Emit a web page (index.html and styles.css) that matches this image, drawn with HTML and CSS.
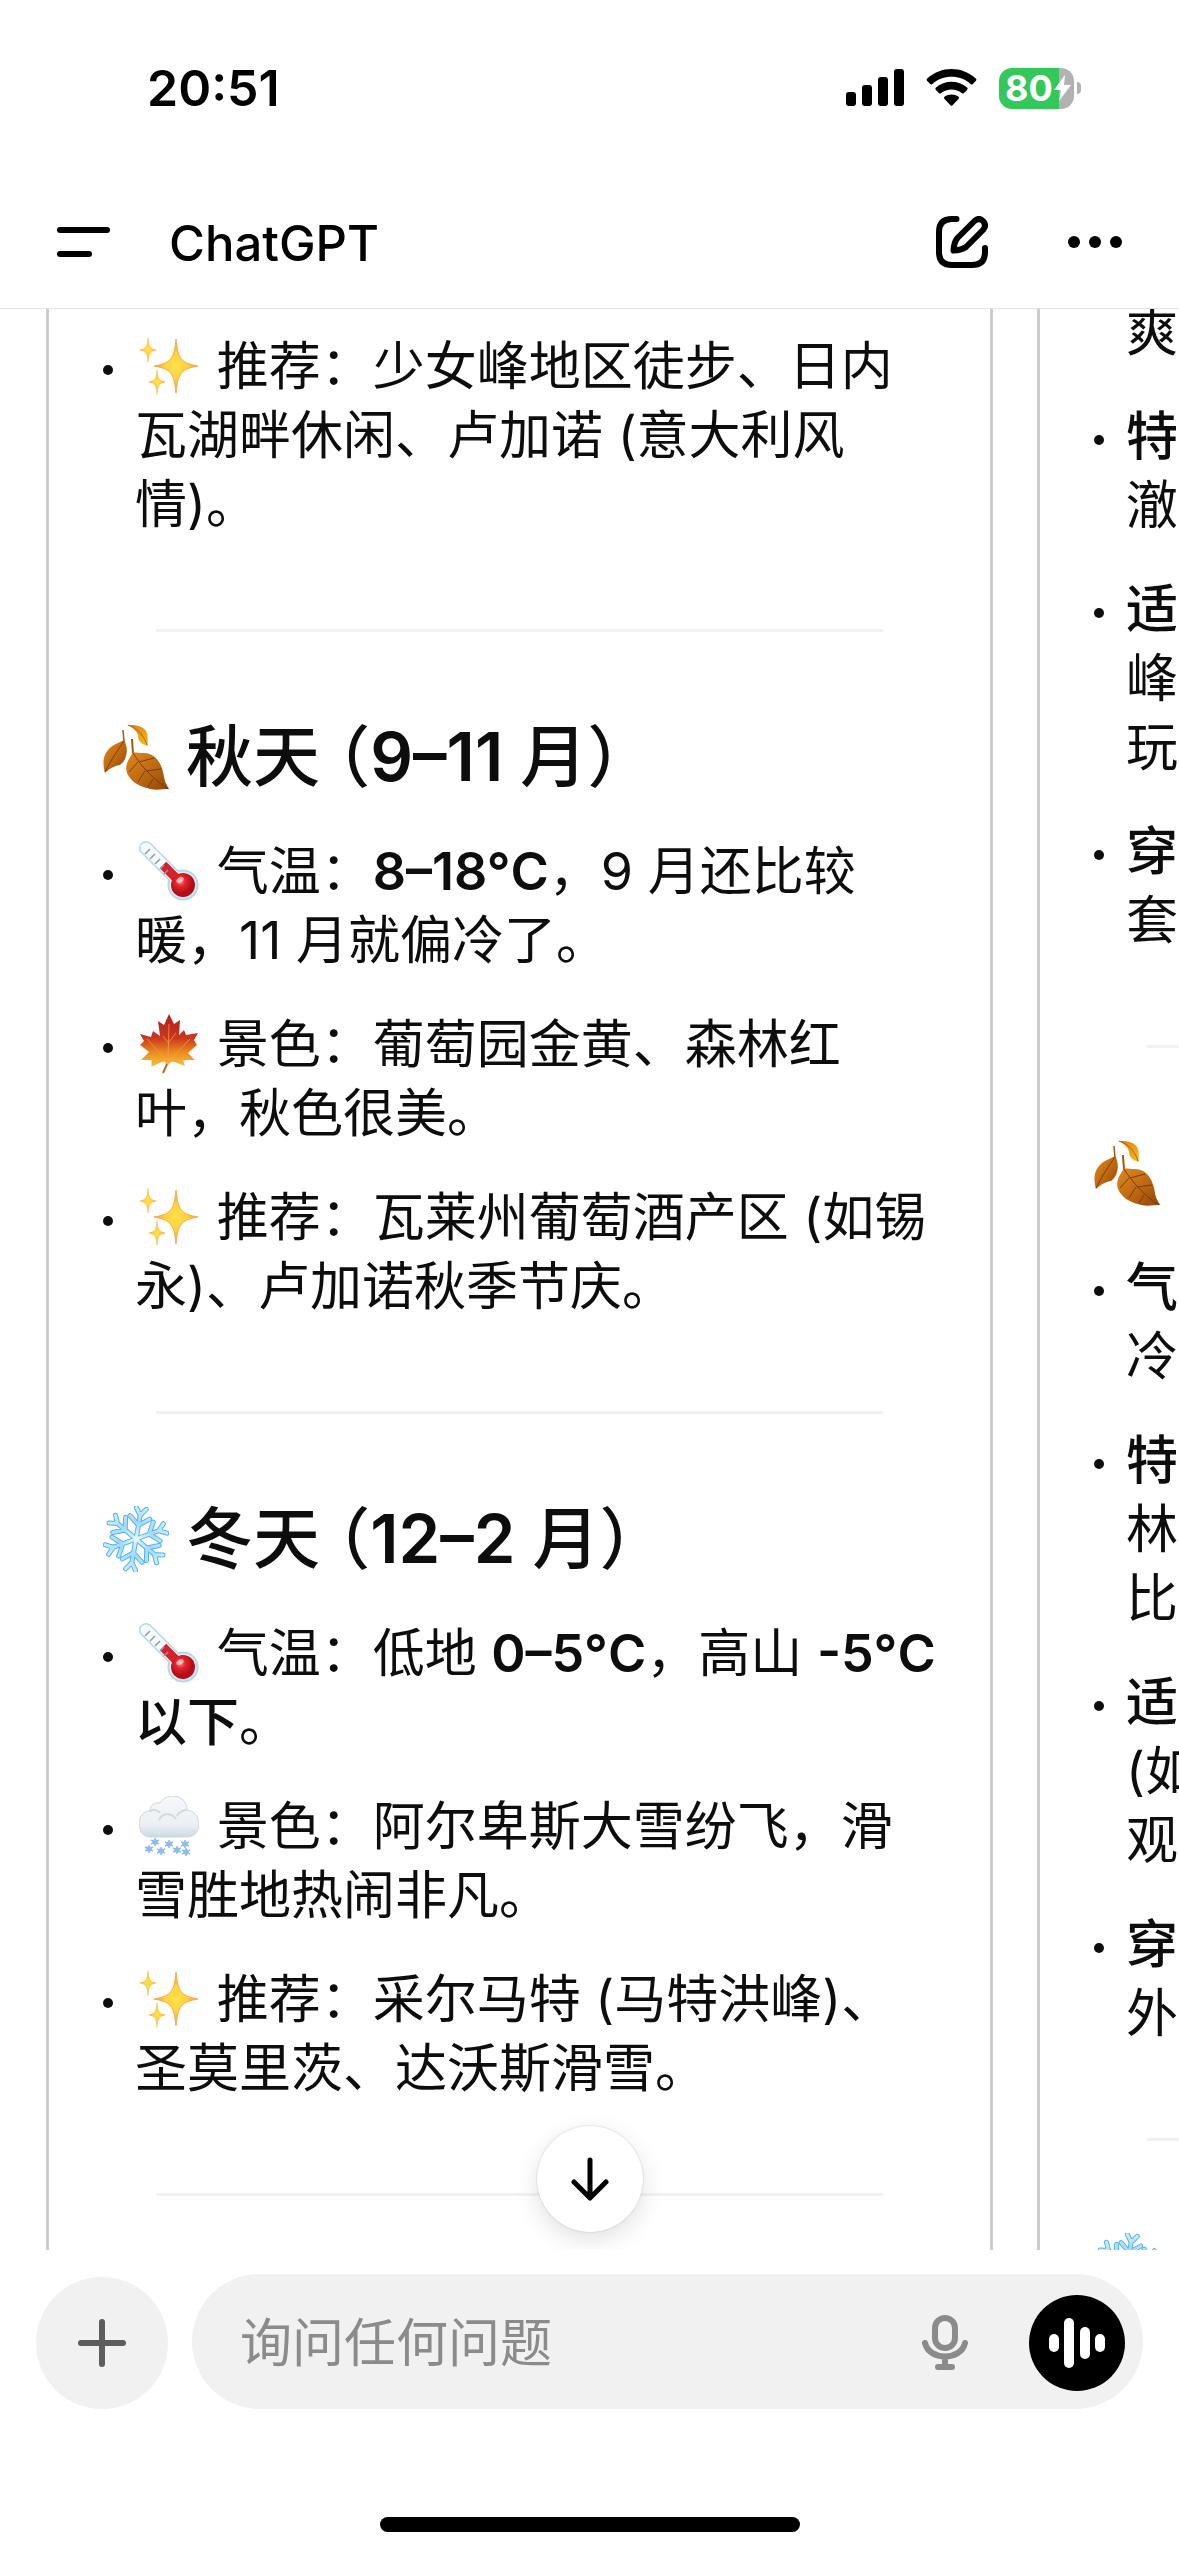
FILE: index.html
```html
<!DOCTYPE html>
<html lang="zh-CN">
<head>
<meta charset="utf-8">
<meta name="viewport" content="width=device-width, initial-scale=1">
<title>ChatGPT</title>
<link rel="stylesheet" href="styles.css">
</head>
<body>
<svg class="defs" width="0" height="0" aria-hidden="true">
  <defs>
    <radialGradient id="gold"><stop offset="0" stop-color="#ffe14a"/><stop offset=".5" stop-color="#ffd23c"/><stop offset="1" stop-color="#f59a3c"/></radialGradient>
    <linearGradient id="maple-fill" x1="0" y1="0" x2="0" y2="1"><stop offset="0" stop-color="#b01f1c"/><stop offset=".45" stop-color="#c9381d"/><stop offset=".72" stop-color="#ea8a20"/><stop offset="1" stop-color="#f8c63a"/></linearGradient>
    <linearGradient id="leaf-fill" x1="0" y1="0" x2="1" y2="1"><stop offset="0" stop-color="#e08a1e"/><stop offset=".5" stop-color="#c06a12"/><stop offset="1" stop-color="#8f4509"/></linearGradient>
    <linearGradient id="leaf-light" x1="0" y1="0" x2="1" y2="1"><stop offset="0" stop-color="#d97a18"/><stop offset="1" stop-color="#f7bd1b"/></linearGradient>
    <radialGradient id="bulb" cx=".4" cy=".35"><stop offset="0" stop-color="#ff8a8a"/><stop offset=".4" stop-color="#e3262e"/><stop offset="1" stop-color="#b20d18"/></radialGradient>
    <radialGradient id="ice" gradientUnits="userSpaceOnUse" cx="33" cy="33" r="33"><stop offset="0" stop-color="#e8f8ff"/><stop offset=".5" stop-color="#9fdcfc"/><stop offset="1" stop-color="#c8effe"/></radialGradient>
    <linearGradient id="cloud-fill" x1="0" y1="0" x2="0" y2="1"><stop offset="0" stop-color="#f6f8fa"/><stop offset=".7" stop-color="#eceff3"/><stop offset="1" stop-color="#c9dbe6"/></linearGradient>
    <path id="star" d="M0-27C2-7 5-3 22 0 5 3 2 7 0 27-2 7-5 3-22 0-5-3-2-7 0-27Z"/>
    <path id="flake-arm" d="M33 33V7M33 19 23 11M33 19 43 11M33 9 28 2M33 9 38 2"/>
    <g id="flake-arms"><use href="#flake-arm"/><use href="#flake-arm" transform="rotate(60 33 33)"/><use href="#flake-arm" transform="rotate(120 33 33)"/><use href="#flake-arm" transform="rotate(180 33 33)"/><use href="#flake-arm" transform="rotate(240 33 33)"/><use href="#flake-arm" transform="rotate(300 33 33)"/></g>
    <g id="mini-flake"><path d="M0-4V4M-4-2 4 2M-4 2 4-2"/><circle r="2"/></g>
  </defs>
  <symbol id="sparkles" viewBox="0 0 60 60">
    <g fill="url(#gold)" stroke="#f8a94e" stroke-width="1">
      <use href="#star" transform="translate(37 30)"/>
      <use href="#star" transform="translate(9 14) scale(.38 .46)"/>
      <use href="#star" transform="translate(18 46) scale(.38 .46)"/>
    </g>
  </symbol>
  <symbol id="thermometer" viewBox="0 0 60 60">
    <path d="M7 7 43 43" stroke="#b9d6e8" stroke-width="14" stroke-linecap="round"/>
    <circle cx="44" cy="44" r="15.500" fill="#b9d6e8"/>
    <path d="M7 7 43 43" stroke="#f4fafd" stroke-width="11" stroke-linecap="round"/>
    <circle cx="44" cy="44" r="13.500" fill="#e2eef5"/>
    <path d="M24 24 43 43" stroke="#d3222b" stroke-width="9"/>
    <circle cx="44" cy="44" r="12" fill="url(#bulb)"/>
    <path d="m6 13 5-5M11 18l5-5M16 23l5-5M21 28l4-4M25 33l4-4" stroke="#8d9da8" stroke-width="1.500"/>
    <ellipse cx="41" cy="39" rx="4" ry="2.500" fill="#fff" opacity=".55" transform="rotate(-35 41 39)"/>
  </symbol>
  <symbol id="maple" viewBox="0 0 60 60">
    <path d="m30 40-1 8-5 11" fill="none" stroke="#c2671f" stroke-width="2"/>
    <path d="M30 0 35 10 41 6 40 21 45 16 47 21 59 19 55 26 58 31 49 39 56 46 44 46 46 52 33 47 29 51 25 47 12 53 13 46 2 46 10 38 1 31 5 27 1 20 12 23 14 17 21 22 19 7 25 11Z" fill="url(#maple-fill)"/>
    <path d="M29 48 30 10M29 48 8 25M29 48 51 25M29 48 12 47M29 48 46 46M30 30l-6-8M30 28l7-9" fill="none" stroke="#f2a548" stroke-width="1" opacity=".7"/>
  </symbol>
  <symbol id="leaves" viewBox="0 0 66 66">
    <path d="M20 6 21 18" stroke="#a5570e" stroke-width="1.500"/>
    <path d="M21 16C26 24 24 36 17 41 10 42 5 46 2 49 0 41-1 33 5 26 10 20 16 19 21 16Z" fill="url(#leaf-fill)"/>
    <path d="M21 17C15 26 9 34 2 48" fill="none" stroke="#7d3c08" stroke-width="1"/>
    <path d="M24 1C31 1 39 1 43 7 46 12 44 17 45 22 38 20 35 17 35 11 33 6 29 3 24 1Z" fill="url(#leaf-light)"/>
    <path d="M25 1C34 4 41 11 44 21" fill="none" stroke="#b9650f" stroke-width="1"/>
    <path d="M29 15 30 30" stroke="#a5570e" stroke-width="2"/>
    <path d="M30 28C37 30 45 27 52 33 58 39 60 46 61 53 62 59 64 61 66 65 59 65 51 67 44 64 36 62 28 58 24 49 21 40 27 34 30 28Z" fill="url(#leaf-fill)"/>
    <path d="M30 29C38 42 50 55 65 65M36 38l15-4M43 47l15-2M35 38 26 48M42 47 35 58M50 55l-5 8" fill="none" stroke="#7d3c08" stroke-width="1"/>
  </symbol>
  <symbol id="snowflake" viewBox="0 0 66 66">
    <g fill="none" stroke-linecap="round" transform="rotate(10 33 33)">
      <use href="#flake-arms" stroke="#58b0ea" stroke-width="5"/>
      <use href="#flake-arms" stroke="url(#ice)" stroke-width="3"/>
    </g>
  </symbol>
  <symbol id="snow-cloud" viewBox="0 0 60 60">
    <path d="M12 41C5 41 0 36 0 28 0 20 5 15 11 15 11 9 16 6 21 7 24 2 29 0 34 0 42 0 48 6 48 14 55 15 60 20 60 28 60 36 55 41 48 41Z" fill="url(#cloud-fill)" stroke="#cfd6dd" stroke-width="1"/>
    <path d="M11 15c4-2 8-1 10 2M48 14c-5 0-8 2-10 6M20 24c3-7 12-8 17-1" fill="none" stroke="#d3d9e0" stroke-width="2"/>
    <g fill="none" stroke="#8dbcec" stroke-width="1.500">
      <use href="#mini-flake" transform="translate(16 46)"/><use href="#mini-flake" transform="translate(10 53)"/><use href="#mini-flake" transform="translate(22 55)"/><use href="#mini-flake" transform="translate(30 48)"/><use href="#mini-flake" transform="translate(38 54)"/><use href="#mini-flake" transform="translate(46 48)"/><use href="#mini-flake" transform="translate(47 56)"/>
    </g>
  </symbol>
</svg>

<div class="status">
  <time class="clock">20:51</time>
  <div class="indicators">
    <svg width="58" height="38" viewBox="0 0 58 38" role="img" aria-label="信号"><rect y="23" width="10" height="14" rx="3"/><rect x="16" y="16" width="10" height="21" rx="3"/><rect x="32" y="8" width="10" height="29" rx="3"/><rect x="48" width="10" height="37" rx="3"/></svg>
    <svg width="51" height="38" viewBox="0 0 51 38" role="img" aria-label="Wi-Fi"><path d="M1.200 9.600Q0 10.800 1.200 12L4.200 15Q5.200 16 6.400 14.900C17 5.300 34 5.300 44.600 14.900Q45.800 16 46.800 15L49.800 12Q51 10.800 49.800 9.600C36-3.200 15-3.200 1.200 9.600Z"/><path d="M9.900 18.500Q8.700 19.700 9.900 20.900L13 24Q14 25 15.200 24C21 19.200 30 19.200 35.800 24Q37 25 38 24L41.100 20.900Q42.300 19.700 41.100 18.500C32 10.800 19 10.800 9.900 18.500Z"/><path d="M18.500 27.700Q17.300 28.800 18.500 30L24.500 36.200Q25.500 37.200 26.500 36.200L32.500 30Q33.700 28.800 32.500 27.700C28.500 24.600 22.500 24.600 18.500 27.700Z"/></svg>
    <div class="battery">
      <div class="battery-body">80<svg width="17" height="26" viewBox="0 0 17 26" aria-hidden="true"><path d="M11 0 0 15H7L5 26 17 10H10Z" fill="#fff"/></svg></div>
      <div class="battery-tip"></div>
    </div>
  </div>
</div>

<header class="topbar">
  <button class="icon-button" aria-label="菜单"><svg width="54" height="30" viewBox="0 0 54 30"><path d="M3 3H50M3 27H32" class="stroke"/></svg></button>
  <h1 class="title">ChatGPT</h1>
  <button class="icon-button" aria-label="新聊天"><svg width="52" height="52" viewBox="0 0 52 52"><path d="M20.500 3H16Q3 3 3 16V36Q3 49 16 49H36Q49 49 49 36V32" class="stroke"/><path d="M38.500 5Q43 1 47 5 51 9.500 47 14L30 31Q26 34 17.500 34.500 18 26 21.500 22Z" class="stroke"/></svg></button>
  <button class="icon-button" aria-label="更多"><svg width="54" height="12" viewBox="0 0 54 12"><circle cx="6" cy="6" r="6"/><circle cx="27" cy="6" r="6"/><circle cx="48" cy="6" r="6"/></svg></button>
</header>

<main class="chat">
  <div class="answers">
    <article class="answer answer-first">
      <ul class="notes">
        <li><svg class="emoji" role="img" aria-label="✨"><use href="#sparkles"/></svg> 推荐：少女峰地区徒步、日内瓦湖畔休闲、卢加诺 (意大利风情)。</li>
      </ul>
      <hr>
      <h2><svg class="emoji" role="img" aria-label="🍂"><use href="#leaves"/></svg> 秋天 （9–11 月）</h2>
      <ul class="notes">
        <li><svg class="emoji" role="img" aria-label="🌡️"><use href="#thermometer"/></svg> 气温：<strong>8–18°C</strong>，9 月还比较暖，11 月就偏冷了。</li>
        <li><svg class="emoji" role="img" aria-label="🍁"><use href="#maple"/></svg> 景色：葡萄园金黄、森林红叶，秋色很美。</li>
        <li><svg class="emoji" role="img" aria-label="✨"><use href="#sparkles"/></svg> 推荐：瓦莱州葡萄酒产区 (如锡永)、卢加诺秋季节庆。</li>
      </ul>
      <hr>
      <h2><svg class="emoji" role="img" aria-label="❄️"><use href="#snowflake"/></svg> 冬天 （12–2 月）</h2>
      <ul class="notes">
        <li><svg class="emoji" role="img" aria-label="🌡️"><use href="#thermometer"/></svg> 气温：低地 <strong>0–5°C</strong>，高山 <strong>-5°C以下</strong>。</li>
        <li><svg class="emoji" role="img" aria-label="🌨️"><use href="#snow-cloud"/></svg> 景色：阿尔卑斯大雪纷飞，滑雪胜地热闹非凡。</li>
        <li><svg class="emoji" role="img" aria-label="✨"><use href="#sparkles"/></svg> 推荐：采尔马特 (马特洪峰)、圣莫里茨、达沃斯滑雪。</li>
      </ul>
      <hr>
    </article>
    <article class="answer">
      <ul class="notes">
        <li class="continued">爽</li>
        <li><strong>特</strong><br>澈</li>
        <li><strong>适</strong><br>峰<br>玩</li>
        <li><strong>穿</strong><br>套</li>
      </ul>
      <hr>
      <h2><svg class="emoji" role="img" aria-label="🍂"><use href="#leaves"/></svg></h2>
      <ul class="notes">
        <li><strong>气</strong><br>冷</li>
        <li><strong>特</strong><br>林<br>比</li>
        <li><strong>适</strong><br>(如<br>观</li>
        <li><strong>穿</strong><br>外</li>
      </ul>
      <hr>
      <h2><svg class="emoji" role="img" aria-label="❄️"><use href="#snowflake"/></svg></h2>
    </article>
  </div>
  <button class="to-bottom" aria-label="滚动到底部"><svg width="38" height="44" viewBox="0 0 38 44"><path d="M19 3V40M3 25 19 41 35 25" class="stroke"/></svg></button>
</main>

<footer class="dock">
  <form class="composer">
    <button type="button" class="add" aria-label="添加"><svg width="48" height="48" viewBox="0 0 48 48"><path d="M24 3V45M3 24H45" class="stroke"/></svg></button>
    <div class="field">
      <input type="text" placeholder="询问任何问题" aria-label="询问任何问题">
      <button type="button" class="icon-button mic" aria-label="听写"><svg width="46" height="56" viewBox="0 0 46 56"><rect x="13" y="3" width="20" height="30" rx="10" class="stroke"/><path d="M3 28C7 46 39 46 43 28M23 42V52M16 52H30" class="stroke"/></svg></button>
      <button type="button" class="voice" aria-label="语音模式"><svg width="56" height="50" viewBox="0 0 56 50"><rect y="16" width="10" height="18" rx="5"/><rect x="15" width="10" height="50" rx="5"/><rect x="31" y="9" width="10" height="32" rx="5"/><rect x="46" y="16" width="10" height="18" rx="5"/></svg></button>
    </div>
  </form>
  <div class="home-indicator"></div>
</footer>
</body>
</html>
```
FILE: styles.css
```css
* {
  box-sizing: border-box;
}

body {
  margin: 0;
  height: 100vh;
  display: flex;
  flex-direction: column;
  background: #fff;
  color: #0d0d0d;
  font-family: Inter, "Noto Sans CJK SC", sans-serif;
  font-size: 52px;
  line-height: 69px;
}

svg {
  display: block;
  flex: none;
}

.defs {
  position: absolute;
}

.stroke {
  fill: none;
  stroke: currentColor;
  stroke-width: 6px;
  stroke-linecap: round;
  stroke-linejoin: round;
}

button {
  flex: none;
  display: flex;
  align-items: center;
  justify-content: center;
  padding: 0;
  border: 0;
  background: none;
  color: #000;
}

/* Status bar */
.status {
  flex: none;
  height: 176px;
  padding: 0 98px 0 147px;
  display: flex;
  align-items: center;
  justify-content: space-between;
  color: #000;
}

.clock {
  font-size: 50px;
  font-weight: 600;
}

.indicators,
.battery {
  display: flex;
  align-items: center;
}

.indicators {
  gap: 22px;
}

.battery {
  gap: 3px;
}

.battery-body {
  width: 75px;
  height: 41px;
  padding-left: 6px;
  display: flex;
  align-items: center;
  gap: 1px;
  border-radius: 13px;
  background: linear-gradient(to right, #34c759 80%, #b2b2b2 80%);
  color: #fff;
  font-size: 36px;
  font-weight: 700;
}

.battery-tip {
  width: 4px;
  height: 12px;
  border-radius: 0 4px 4px 0;
  background: #b2b2b2;
}

/* Top bar */
.topbar {
  flex: none;
  height: 133px;
  padding: 0 57px;
  display: flex;
  align-items: center;
  border-bottom: 1px solid #e3e3e3;
}

.title {
  margin: 0 auto 0 58px;
  padding-top: 3px;
  color: #000;
  font-size: 49px;
  font-weight: 500;
}

.topbar .icon-button:last-child {
  margin-left: 80px;
}

/* Conversation */
.chat {
  position: relative;
  flex: 1;
  min-height: 0;
  overflow: hidden;
}

.answers {
  display: flex;
  gap: 44px;
  margin-top: -11px;
  padding-left: 46px;
}

.answer {
  flex: 0 0 calc(100% - 186px);
  padding: 0 54px;
  border: solid #ccc;
  border-width: 0 3px;
}

.answer-first {
  padding-top: 34px;
}

.notes {
  display: flex;
  flex-direction: column;
  gap: 35px;
  margin: 0;
  padding: 0;
  list-style: none;
}

.notes li {
  position: relative;
  padding-left: 32px;
}

.notes li::before {
  content: "";
  position: absolute;
  left: 0;
  top: 33px;
  width: 10px;
  height: 10px;
  border-radius: 50%;
  background: #0d0d0d;
}

.notes .continued::before {
  display: none;
}

strong,
h2 {
  font-weight: 600;
  font-family: Inter, "Noto Sans CJK SC Medium", "Noto Sans CJK SC", sans-serif;
}

hr {
  height: 3px;
  margin: 90px 53px 83px;
  border: 0;
  background: #f2f2f2;
}

h2 {
  margin: 0 0 39px;
  font-size: 67px;
  line-height: 83px;
  font-feature-settings: "halt";
}

.emoji {
  display: inline-block;
  width: 60px;
  height: 60px;
  margin: 0 3px 0 4px;
  vertical-align: -11px;
}

h2 .emoji {
  width: 66px;
  height: 66px;
  margin: 0;
  vertical-align: -9px;
}

.to-bottom {
  position: absolute;
  left: 50%;
  bottom: 18px;
  width: 106px;
  height: 106px;
  transform: translateX(-50%);
  border-radius: 50%;
  background: #fff;
  box-shadow: 0 0 2px rgba(0, 0, 0, 0.2), 0 8px 24px rgba(0, 0, 0, 0.12);
}

.to-bottom .stroke {
  stroke-width: 5px;
}

/* Composer */
.dock {
  flex: none;
  padding: 24px 36px;
}

.composer {
  display: flex;
  align-items: flex-end;
  gap: 24px;
}

.add {
  width: 132px;
  height: 132px;
  border-radius: 50%;
  background: #f1f1f1;
  color: #5d5d5d;
}

.field {
  flex: 1;
  min-width: 0;
  height: 135px;
  padding: 3px 18px 0 48px;
  display: flex;
  align-items: center;
  border-radius: 68px;
  background: #f1f1f1;
}

.field input {
  flex: 1;
  min-width: 0;
  height: 80px;
  padding: 0;
  border: 0;
  outline: 0;
  background: none;
  color: #0d0d0d;
  font: inherit;
}

.field input::placeholder {
  color: #8b8b8b;
  opacity: 1;
}

.mic {
  margin-right: 61px;
  color: #8b8b8b;
}

.voice {
  width: 96px;
  height: 96px;
  border-radius: 50%;
  background: #000;
}

.voice svg {
  fill: #fff;
}

.home-indicator {
  width: 420px;
  height: 15px;
  margin: 108px auto 0;
  border-radius: 8px;
  background: #000;
}
```
